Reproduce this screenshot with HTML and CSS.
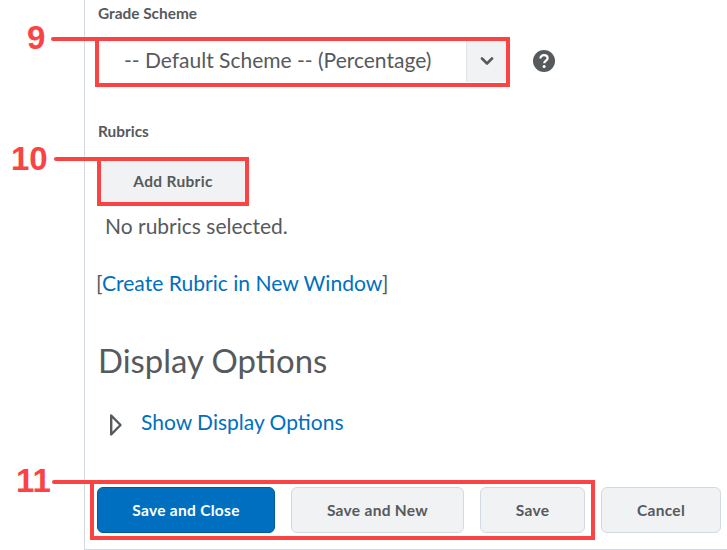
FILE: index.html
```html
<!DOCTYPE html>
<html lang="en">
<head>
    <meta charset="UTF-8">
    <title>Grade Scheme and Rubrics</title>
    <link rel="stylesheet" href="styles.css">
</head>
<body>
    <main class="panel">
        <div class="field-label label-scheme">Grade Scheme</div>
        <div class="scheme-row">
            <div class="select">
                <span class="select-value">-- Default Scheme -- (Percentage)</span>
                <span class="select-arrow">
                    <svg width="14" height="9" viewBox="0 0 14 9"><path d="M2 1.5 L7 6.5 L12 1.5" fill="none" stroke="#565a5c" stroke-width="2.6" stroke-linecap="round" stroke-linejoin="round"/></svg>
                </span>
            </div>
            <svg class="help-icon" width="22" height="22" viewBox="0 0 22 22">
                <circle cx="11" cy="11" r="11" fill="#565a5c"/>
                <path d="M7.4 8.6 C7.4 6.4 9 5.2 11 5.2 C13.1 5.2 14.6 6.5 14.6 8.3 C14.6 10.6 11.2 10.8 11.2 13.2" fill="none" stroke="#fff" stroke-width="2.2"/>
                <circle cx="11.1" cy="16.4" r="1.5" fill="#fff"/>
            </svg>
        </div>

        <div class="field-label label-rubrics">Rubrics</div>
        <button class="btn btn-rubric">Add Rubric</button>
        <p class="no-rubrics">No rubrics selected.</p>
        <p class="create-link">[<a href="#">Create Rubric in New Window</a>]</p>

        <h2 class="section-title">Display Options</h2>
        <div class="show-options">
            <svg class="show-arrow" width="14" height="24" viewBox="0 0 14 24"><path d="M2.2 2.5 L11.5 12 L2.2 21.5 Z" fill="none" stroke="#565a5c" stroke-width="2.4" stroke-linejoin="round"/></svg>
            <a href="#">Show Display Options</a>
        </div>

        <div class="actions">
            <button class="btn btn-primary btn-close">Save and Close</button>
            <button class="btn btn-new">Save and New</button>
            <button class="btn btn-save">Save</button>
            <button class="btn btn-cancel">Cancel</button>
        </div>
    </main>

    <!-- callouts drawn over the page -->
    <div class="callout-num num-9">9</div>
    <div class="callout-line line-9"></div>
    <div class="callout-box box-9"></div>
    <div class="callout-num num-10">10</div>
    <div class="callout-line line-10"></div>
    <div class="callout-box box-10"></div>
    <div class="callout-num num-11">11</div>
    <div class="callout-line line-11"></div>
    <div class="callout-box box-11"></div>
</body>
</html>
```

FILE: styles.css
```css
html, body {
    margin: 0;
    padding: 0;
    background-color: #ffffff;
}
body {
    width: 727px;
    height: 550px;
    overflow: hidden;
    position: relative;
    font-family: Lato, "Open Sans", sans-serif;
    color: #565a5c;
}
.panel {
    margin-left: 84px;
    height: 550px;
    box-sizing: border-box;
    border-left: 1px solid #d3d9e3;
    border-bottom: 1px solid #d3d9e3;
    padding-left: 12px;
    overflow: hidden;
}
.field-label {
    margin-left: 1px;
    font-size: 15.4px;
    font-weight: 700;
    line-height: 17px;
}
.label-scheme {
    margin-top: 5px;
}
.scheme-row {
    display: flex;
    align-items: center;
    margin-top: 18px;
}
.select {
    display: flex;
    width: 407px;
    height: 42px;
    margin-left: 2px;
    border-top: 1px solid #e6e8ec;
    box-sizing: border-box;
}
.select-value {
    flex: 1;
    padding-left: 25px;
    font-size: 21px;
    line-height: 38px;
}
.select-arrow {
    width: 40px;
    display: flex;
    align-items: center;
    justify-content: center;
    background-color: #f1f2f4;
    border-left: 1px solid #e0e3e9;
    box-sizing: border-box;
}
.help-icon {
    margin-left: 27px;
}
.label-rubrics {
    margin-top: 41px;
}
.btn {
    display: block;
    height: 46px;
    box-sizing: border-box;
    background-color: #f1f2f4;
    border: 1px solid #d3d9e3;
    border-radius: 6px;
    font-family: Lato, "Open Sans", sans-serif;
    font-size: 15.5px;
    font-weight: 700;
    letter-spacing: 0.3px;
    color: #565a5c;
    padding: 0;
}
.btn-rubric {
    width: 144px;
    height: 41px;
    margin: 21px 0 0 4px;
    padding-bottom: 2px;
    border: none;
    border-radius: 0;
}
.no-rubrics {
    margin: 12px 0 0 8px;
    font-size: 21px;
    line-height: 24px;
}
.create-link {
    margin: 33px 0 0 -1px;
    font-size: 21.1px;
    line-height: 24px;
    color: #565a5c;
}
a {
    color: #006fbf;
    text-decoration: none;
}
.section-title {
    margin: 48px 0 0 1px;
    font-size: 32.9px;
    font-weight: 400;
    line-height: 36px;
}
.show-options {
    display: flex;
    align-items: center;
    margin: 28px 0 0 12px;
    font-size: 21px;
    line-height: 30px;
}
.show-arrow {
    margin-top: 6px;
}
.show-options a {
    margin-left: 18px;
}
.actions {
    display: flex;
    gap: 16px;
    margin-top: 50px;
}
.btn-primary {
    background-color: #006fbf;
    border-color: #005a9e;
    color: #ffffff;
}
.btn-close { width: 178px; }
.btn-new { width: 173px; }
.btn-save { width: 105px; }
.btn-cancel { width: 120px; }

/* red annotations */
.callout-num {
    position: absolute;
    font-family: "Liberation Sans", Arial, sans-serif;
    font-size: 33px;
    font-weight: 700;
    line-height: 38px;
    color: #fb4343;
}
.num-9 { left: 27px; top: 19px; }
.num-10 { left: 11px; top: 140px; }
.num-11 { left: 16px; top: 462px; }
.callout-line {
    position: absolute;
    height: 4px;
    border-radius: 2px;
    background-color: #fb4343;
}
.line-9 { left: 51px; top: 37px; width: 46px; }
.line-10 { left: 54px; top: 157px; width: 46px; }
.line-11 { left: 52px; top: 480px; width: 40px; }
.callout-box {
    position: absolute;
    box-sizing: border-box;
    border: 4px solid #fb4343;
}
.box-9 { left: 95px; top: 37px; width: 415px; height: 50px; }
.box-10 { left: 97px; top: 157px; width: 152px; height: 49px; }
.box-11 { left: 90px; top: 480px; width: 505px; height: 60px; }
```
